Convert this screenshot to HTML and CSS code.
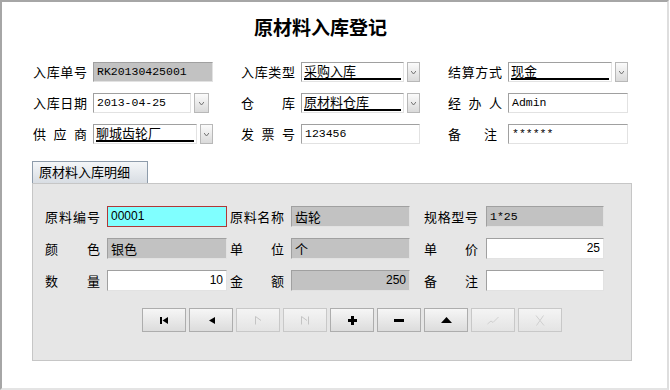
FILE: index.html
```html
<!DOCTYPE html>
<html>
<head>
<meta charset="utf-8">
<link rel="stylesheet" href="styles.css">
</head>
<body>
<div class="window">
  <h1 class="title">原材料入库登记</h1>

  <div class="form">
    <div class="field"><span class="lbl">入库单号</span><div class="ctl ro mono">RK20130425001</div></div>
    <div class="field"><span class="lbl">入库类型</span><div class="combo"><div class="box"><span class="sel">采购入库</span></div><span class="drop"><svg width="5" height="3" viewBox="0 0 5 3"><path d="M0 0 L2.5 3 L5 0" fill="none" stroke="#707070" stroke-width="1"/></svg></span></div></div>
    <div class="field"><span class="lbl">结算方式</span><div class="combo"><div class="box"><span class="sel">现金</span></div><span class="drop"><svg width="5" height="3" viewBox="0 0 5 3"><path d="M0 0 L2.5 3 L5 0" fill="none" stroke="#707070" stroke-width="1"/></svg></span></div></div>

    <div class="field"><span class="lbl">入库日期</span><div class="combo date"><div class="box mono">2013-04-25</div><span class="drop"><svg width="5" height="3" viewBox="0 0 5 3"><path d="M0 0 L2.5 3 L5 0" fill="none" stroke="#707070" stroke-width="1"/></svg></span></div></div>
    <div class="field"><span class="lbl">仓 库</span><div class="combo"><div class="box"><span class="sel">原材料仓库</span></div><span class="drop"><svg width="5" height="3" viewBox="0 0 5 3"><path d="M0 0 L2.5 3 L5 0" fill="none" stroke="#707070" stroke-width="1"/></svg></span></div></div>
    <div class="field"><span class="lbl">经 办 人</span><div class="ctl wh mono">Admin</div></div>

    <div class="field"><span class="lbl">供 应 商</span><div class="combo"><div class="box"><span class="sel">聊城齿轮厂</span></div><span class="drop"><svg width="5" height="3" viewBox="0 0 5 3"><path d="M0 0 L2.5 3 L5 0" fill="none" stroke="#707070" stroke-width="1"/></svg></span></div></div>
    <div class="field"><span class="lbl">发 票 号</span><div class="ctl wh mono">123456</div></div>
    <div class="field"><span class="lbl short">备 注</span><div class="ctl wh mono">******</div></div>
  </div>

  <div class="tab">原材料入库明细</div>
  <div class="panel">
    <div class="detail">
      <span class="dl">原料编号</span><div class="ctl cyan sans">00001</div>
      <span class="dl c2">原料名称</span><div class="ctl ro">齿轮</div>
      <span class="dl c3">规格型号</span><div class="ctl ro mono">1*25</div>

      <span class="dl">颜 色</span><div class="ctl ro">银色</div>
      <span class="dl c2">单 位</span><div class="ctl ro">个</div>
      <span class="dl c3">单 价</span><div class="ctl wh sans num">25</div>

      <span class="dl">数 量</span><div class="ctl wh sans num">10</div>
      <span class="dl c2">金 额</span><div class="ctl ro sans num">250</div>
      <span class="dl c3">备 注</span><div class="ctl wh"></div>
    </div>

    <div class="nav">
      <button class="btn"><svg width="8" height="7" viewBox="0 0 8 7"><rect x="0" y="0" width="2" height="7" fill="#000"/><path d="M8 0 L2.5 3.5 L8 7 Z" fill="#000"/></svg></button>
      <button class="btn"><svg width="7" height="7" viewBox="0 0 7 7"><path d="M7 0 L1 3.5 L7 7 Z" fill="#000"/></svg></button>
      <button class="btn off"><svg width="8" height="9" viewBox="0 0 8 9"><path d="M1.5 8.5 L1.5 0.5 L7 4.5" fill="none" stroke="#c4c4c4" stroke-width="1"/></svg></button>
      <button class="btn off"><svg width="10" height="9" viewBox="0 0 10 9"><path d="M1.5 8.5 L1.5 0.5 L7 4.5 M8.5 0.5 L8.5 8.5" fill="none" stroke="#c4c4c4" stroke-width="1"/></svg></button>
      <button class="btn"><svg width="9" height="9" viewBox="0 0 9 9"><path d="M3 0 H6 V3 H9 V6 H6 V9 H3 V6 H0 V3 H3 Z" fill="#000"/></svg></button>
      <button class="btn"><svg width="10" height="3" viewBox="0 0 10 3"><rect x="0" y="0" width="10" height="3" fill="#000"/></svg></button>
      <button class="btn"><svg width="11" height="6" viewBox="0 0 11 6"><path d="M0 6 L5.5 0 L11 6 Z" fill="#000"/></svg></button>
      <button class="btn off"><svg width="12" height="9" viewBox="0 0 12 9"><path d="M0.5 8 L4 5 L6 6.5 L11.5 1" fill="none" stroke="#cfcfcf" stroke-width="1"/></svg></button>
      <button class="btn off"><svg width="10" height="11" viewBox="0 0 10 11"><path d="M1 0.5 C4 4 6 7 9 10.5 M8.5 0.5 C6 4 4 7 1.5 10.5" fill="none" stroke="#cfcfcf" stroke-width="1"/></svg></button>
    </div>
  </div>
</div>
</body>
</html>
```

FILE: styles.css
```css
* { box-sizing: border-box; }

body {
  margin: 0;
  background: #fff;
  font-family: "Noto Sans CJK SC", "Liberation Sans", sans-serif;
  font-size: 13px;
  color: #000;
}

.window {
  width: 669px;
  height: 390px;
  border-top: 2px solid #a6a6a6;
  border-left: 2px solid #a6a6a6;
  border-right: 2px solid #dedede;
  border-bottom: 2px solid #e4e4e4;
  background: #fff;
}

.title {
  margin: 0;
  padding-top: 12px;
  padding-right: 28px;
  text-align: center;
  font-size: 19px;
  line-height: 26px;
  font-weight: bold;
}

.form {
  display: grid;
  grid-template-columns: 180px 179px 180px;
  grid-auto-rows: 20px;
  column-gap: 28px;
  row-gap: 11px;
  margin-top: 22px;
  padding-left: 31px;
}

.field {
  display: flex;
  align-items: stretch;
}

.lbl, .dl {
  white-space: nowrap;
}

.field .lbl {
  flex: 0 0 60px;
  text-align: justify;
  text-align-last: justify;
  width: 60px;
  padding-right: 6px;
  display: block;
  line-height: 20px;
}

.field .lbl.short {
  padding-right: 11px;
}

.ctl {
  flex: 1;
  height: 20px;
  line-height: 17px;
  padding: 0 3px;
  border: 1px solid;
  border-color: #a0a0a0 #e2e2e2 #e2e2e2 #a0a0a0;
  background: #fff;
  white-space: nowrap;
  overflow: hidden;
}

.mono {
  font-family: "Liberation Mono", "Noto Sans CJK SC", monospace;
  font-size: 11.5px;
}

.sans {
  font-family: "Liberation Sans", sans-serif;
  font-size: 12px;
}

.ro { background: #c2c2c2; }
.wh { background: #fff; }
.num { text-align: right; }

.cyan {
  background: #80ffff;
  border: 1px solid #b03838;
}

.combo {
  flex: 1;
  display: flex;
  gap: 3px;
}

.combo .box {
  flex: 1;
  height: 20px;
  border: 1px solid;
  border-color: #a0a0a0 #e2e2e2 #e2e2e2 #a0a0a0;
  background: #fff;
  padding: 0 2px 1px 2px;
  display: flex;
  align-items: stretch;
  line-height: 16px;
}

.combo.date {
  flex: 0 0 116px;
}

.combo.date .box {
  padding: 0 3px;
  line-height: 17px;
}

.sel {
  flex: 1;
  border-bottom: 2px solid #000;
  white-space: nowrap;
}

.drop {
  flex: 0 0 13px;
  height: 20px;
  border: 1px solid #b8b8b8;
  background: linear-gradient(#fbfbfb, #dadada);
  display: flex;
  align-items: center;
  justify-content: center;
}

.date .drop {
  flex-basis: 15px;
}

.tab {
  margin-top: 17px;
  margin-left: 30px;
  width: 116px;
  height: 22px;
  border: 1px solid #8e9cab;
  border-bottom: none;
  background: linear-gradient(#f4f6f8, #d8dde3);
  padding-left: 6px;
  line-height: 20px;
  font-size: 13px;
}

.panel {
  margin-left: 30px;
  width: 600px;
  height: 178px;
  border: 1px solid #c6c6c6;
  background: #e6e6e6;
  padding: 22px 0 0 12px;
}

.detail {
  display: grid;
  grid-template-columns: 62px 120px 64px 119px 76px 118px;
  grid-auto-rows: 21px;
  row-gap: 11px;
}

.detail .ctl {
  height: 21px;
  line-height: 19px;
}

.dl {
  display: block;
  width: 55px;
  line-height: 21px;
  text-align: justify;
  text-align-last: justify;
}

.dl.c2 { margin-left: 3px; width: 54px; }
.dl.c3 { margin-left: 14px; width: 54px; }

.nav {
  display: flex;
  gap: 3px;
  margin-top: 17px;
  margin-left: 97px;
}

.btn {
  width: 44px;
  height: 24px;
  padding: 0;
  border: 1px solid #adadad;
  background: linear-gradient(#f6f6f6, #dcdcdc);
  display: flex;
  align-items: center;
  justify-content: center;
}

.btn.off {
  border-color: #c8c8c8;
  background: linear-gradient(#f4f4f4, #e4e4e4);
}
```
